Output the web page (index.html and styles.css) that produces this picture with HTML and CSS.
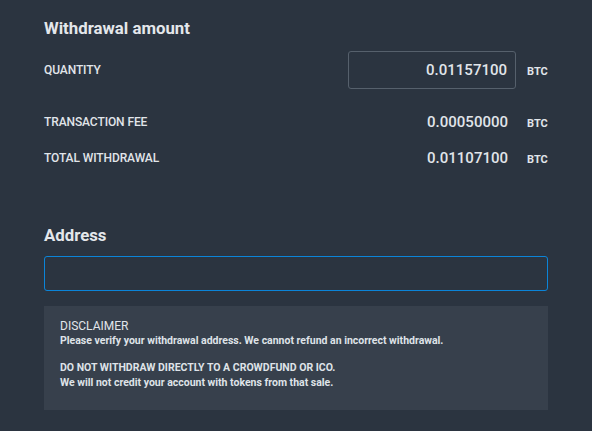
FILE: index.html
```html
<!DOCTYPE html>
<html lang="en">
<head>
    <meta charset="UTF-8">
    <title>Withdraw</title>
    <link rel="stylesheet" href="styles.css">
</head>
<body>
    <div class="panel">
        <h2 class="section-title">Withdrawal amount</h2>

        <div class="amount-row row-qty">
            <div class="label">QUANTITY</div>
            <div class="value-wrap">
                <input class="amount-input" type="text" value="0.01157100">
                <span class="unit">BTC</span>
            </div>
        </div>

        <div class="amount-row row-fee">
            <div class="label">TRANSACTION FEE</div>
            <div class="value-wrap">
                <span class="amount">0.00050000</span>
                <span class="unit">BTC</span>
            </div>
        </div>

        <div class="amount-row row-total">
            <div class="label">TOTAL WITHDRAWAL</div>
            <div class="value-wrap">
                <span class="amount">0.01107100</span>
                <span class="unit">BTC</span>
            </div>
        </div>

        <h2 class="section-title address-title">Address</h2>
        <input class="address-input" type="text">

        <div class="disclaimer">
            <div class="disclaimer-title">DISCLAIMER</div>
            <p>Please verify your withdrawal address. We cannot refund an incorrect withdrawal.</p>
            <p class="gap">DO NOT WITHDRAW DIRECTLY TO A CROWDFUND OR ICO.</p>
            <p>We will not credit your account with tokens from that sale.</p>
        </div>
    </div>
</body>
</html>
```

FILE: styles.css
```css
* {
    margin: 0;
    padding: 0;
    box-sizing: border-box;
    font-family: Roboto, "Liberation Sans", sans-serif;
}

body {
    background-color: #2b3440;
    color: #e1e5ea;
}

.panel {
    padding: 16px 44px 20px;
}

.section-title {
    font-size: 16.8px;
    font-weight: bold;
    line-height: 24px;
    color: #e4e7eb;
}

.amount-row {
    display: flex;
    align-items: center;
    justify-content: space-between;
}

.row-qty {
    margin-top: 11px;
    height: 38px;
}

.row-fee {
    margin-top: 14px;
    height: 38px;
}

.row-total {
    margin-top: -2px;
    height: 38px;
}

.label {
    font-size: 12px;
    font-weight: 500;
    letter-spacing: -0.1px;
    color: #e1e5ea;
}

.value-wrap {
    display: flex;
    align-items: center;
}

.amount-input,
.amount {
    width: 168px;
    text-align: right;
    padding-right: 8px;
    font-size: 15px;
    font-weight: 500;
    color: #e1e5ea;
}

.amount-input {
    height: 38px;
    background: transparent;
    border: 1px solid #56606c;
    border-radius: 3px;
    outline: none;
}

.unit {
    margin-left: 11px;
    margin-top: 3px;
    width: 21px;
    font-size: 11px;
    font-weight: bold;
    color: #e1e5ea;
}

.address-title {
    margin-top: 46px;
}

.address-input {
    display: block;
    width: 100%;
    height: 35px;
    margin-top: 9px;
    background: transparent;
    border: 1px solid #0b84d8;
    border-radius: 3px;
    outline: none;
}

.disclaimer {
    margin-top: 15px;
    height: 104px;
    background-color: #37404c;
    padding: 13px 16px;
}

.disclaimer-title {
    font-size: 12px;
    line-height: 14px;
    color: #e1e5ea;
}

.disclaimer p {
    font-size: 10.5px;
    font-weight: bold;
    line-height: 15px;
    color: #dfe3e8;
}

.disclaimer p.gap {
    margin-top: 12px;
}
```
